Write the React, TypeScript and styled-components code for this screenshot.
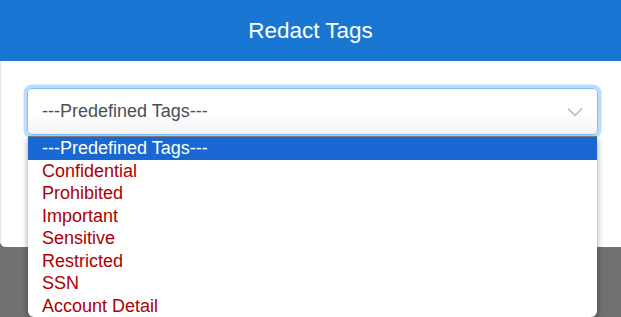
import React, { useState } from 'react';
import styled, { createGlobalStyle } from 'styled-components';

const GlobalStyle = createGlobalStyle`
  html, body {
    margin: 0;
    padding: 0;
    background: #717171;
    font-family: "Liberation Sans", Arial, sans-serif;
  }
`;

const Page = styled.div`
  position: relative;
  width: 621px;
  height: 317px;
  overflow: hidden;
`;

const Modal = styled.div`
  width: 640px;
  height: 247px;
  background: #ffffff;
  border-radius: 0 0 6px 6px;
  box-shadow: inset 1px 0 0 #e6e6e6;
`;

const Header = styled.div`
  height: 61px;
  background: #1976d2;
  display: flex;
  align-items: center;
  justify-content: center;
  padding-right: 19px;
`;

const Title = styled.h2`
  margin: 0;
  color: #ffffff;
  font-size: 22.5px;
  font-weight: 400;
`;

const Body = styled.div`
  padding: 27px 42px 0 27px;
`;

const SelectWrap = styled.div`
  position: relative;
`;

const Trigger = styled.div`
  height: 47px;
  box-sizing: border-box;
  display: flex;
  align-items: center;
  justify-content: space-between;
  padding: 0 14px 0 14px;
  border: 1px solid #80bdff;
  border-radius: 5px;
  background: linear-gradient(#ffffff 55%, #f3f3f3);
  box-shadow: 0 0 0 3.5px #bcdcfd;
  color: #495057;
  font-size: 18px;
  cursor: pointer;
`;

const Dropdown = styled.ul`
  position: absolute;
  top: 49px;
  left: 1px;
  right: 1px;
  margin: 0;
  padding: 0;
  list-style: none;
  background: #ffffff;
  border-radius: 0 0 6px 6px;
  box-shadow: 0 -1px 0 #7a7a7a, 0 2px 6px rgba(0, 0, 0, 0.4);
  overflow: hidden;
`;

const Option = styled.li<{ $active?: boolean }>`
  height: 22.5px;
  line-height: 22.5px;
  padding-left: 14px;
  font-size: 18px;
  color: ${(p) => (p.$active ? '#ffffff' : '#ad0000')};
  background: ${(p) => (p.$active ? '#1967d2' : 'transparent')};
  cursor: default;
`;

const tags = [
  'Confidential',
  'Prohibited',
  'Important',
  'Sensitive',
  'Restricted',
  'SSN',
  'Account Detail',
];

const Chevron = () => (
  <svg width="16" height="10" viewBox="0 0 16 10" fill="none">
    <path d="M1 1.5 L8 8.5 L15 1.5" stroke="#b4b6bf" strokeWidth="1.4" />
  </svg>
);

export default function App() {
  const [value, setValue] = useState('---Predefined Tags---');

  return (
    <>
      <GlobalStyle />
      <Page>
        <Modal>
          <Header>
            <Title>Redact Tags</Title>
          </Header>
          <Body>
            <SelectWrap>
              <Trigger>
                <span>{value}</span>
                <Chevron />
              </Trigger>
              <Dropdown>
                <Option $active onClick={() => setValue('---Predefined Tags---')}>
                  ---Predefined Tags---
                </Option>
                {tags.map((t) => (
                  <Option key={t} onClick={() => setValue(t)}>
                    {t}
                  </Option>
                ))}
              </Dropdown>
            </SelectWrap>
          </Body>
        </Modal>
      </Page>
    </>
  );
}
